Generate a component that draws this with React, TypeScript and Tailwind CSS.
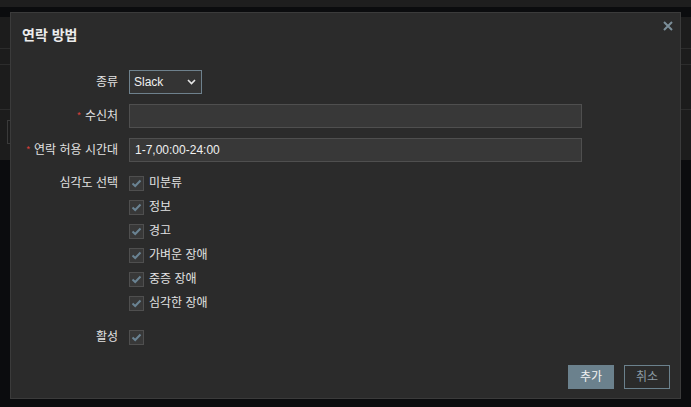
import React from "react";

const font = { fontFamily: '"Liberation Sans", "Noto Sans CJK KR", Arial, sans-serif' };

function Check() {
  return (
    <span className="flex h-[15px] w-[15px] shrink-0 items-center justify-center border border-[#4f4f4f] bg-[#383838]">
      <svg width="11" height="9" viewBox="0 0 11 9">
        <polyline points="1.5,4.5 4.2,7 9.5,1.5" fill="none" stroke="#6a8393" strokeWidth="2" />
      </svg>
    </span>
  );
}

function Label({ children, req }: { children: React.ReactNode; req?: boolean }) {
  return (
    <div className="w-[107px] shrink-0 text-right text-[12px] text-[#e2e2e2] whitespace-nowrap">
      {req && <span className="mr-[4px] text-[9px] text-[#e0413b] align-[2px]">*</span>}
      {children}
    </div>
  );
}

const severities = ["미분류", "정보", "경고", "가벼운 장애", "중증 장애", "심각한 장애"];

export default function App() {
  return (
    <div className="relative h-[407px] w-[691px] overflow-hidden bg-[#0b0c0e]" style={font}>
      <div className="h-[7px] bg-[#1e1e1e]" />
      <div className="mt-[10px] h-[143px] bg-[#1c1c1c]">
        <div className="h-[32px] border-b border-[#2c2c2c]" />
        <div className="h-[16px] border-b border-[#2c2c2c]" />
        <div className="h-[45px] border-b border-[#2c2c2c]" />
        <div className="ml-[7px] mt-[10px] h-[24px] w-[20px] border border-[#3a3a3a]" />
      </div>

      <div className="absolute left-[10px] top-[12px] flex h-[387px] w-[671px] flex-col border border-[#3b3b3b] bg-[#2b2b2b] text-[#e2e2e2]">
        <div className="relative pl-[11px] pt-[12px]">
          <div className="text-[14px] font-bold leading-[20px] text-[#ececec]">연락 방법</div>
          <svg className="absolute right-[7px] top-[8px]" width="10" height="10" viewBox="0 0 10 10">
            <path d="M1 1 L9 9 M9 1 L1 9" stroke="#7b8e99" strokeWidth="2" />
          </svg>
        </div>

        <div className="mt-[25px] flex flex-col gap-[10px]">
          <div className="flex items-center gap-[11px]">
            <Label>종류</Label>
            <div className="flex h-[24px] w-[73px] items-center justify-between border border-[#6e818d] bg-[#343434] pl-[4px] pr-[5px] text-[12px] text-[#f0f0f0]">
              <span>Slack</span>
              <svg width="9" height="6" viewBox="0 0 9 6">
                <polyline points="1,1 4.5,4.5 8,1" fill="none" stroke="#e6e6e6" strokeWidth="1.6" />
              </svg>
            </div>
          </div>
          <div className="flex items-center gap-[11px]">
            <Label req>수신처</Label>
            <div className="h-[24px] w-[453px] border border-[#4f4f4f] bg-[#383838]" />
          </div>
          <div className="flex items-center gap-[11px]">
            <Label req>연락 허용 시간대</Label>
            <div className="flex h-[24px] w-[453px] items-center border border-[#4f4f4f] bg-[#383838] pl-[5px] text-[12px] text-[#f0f0f0]">
              1-7,00:00-24:00
            </div>
          </div>
        </div>

        <div className="mt-[9px] flex gap-[11px]">
          <div className="flex h-[24px] items-center">
            <Label>심각도 선택</Label>
          </div>
          <div className="flex flex-col">
            {severities.map((s) => (
              <div key={s} className="flex h-[24px] items-center gap-[5px] text-[12px] text-[#e2e2e2]">
                <Check />
                <span>{s}</span>
              </div>
            ))}
          </div>
        </div>

        <div className="mt-[10px] flex h-[24px] items-center gap-[11px]">
          <Label>활성</Label>
          <Check />
        </div>

        <div className="mt-auto flex justify-end gap-[10px] pb-[9px] pr-[10px]">
          <div className="flex h-[24px] w-[46px] items-center justify-center bg-[#6b818d] text-[12px] text-[#f2f2f2]">추가</div>
          <div className="flex h-[24px] w-[46px] items-center justify-center border border-[#6b818d] text-[12px] text-[#8c9ba4]">취소</div>
        </div>
      </div>
    </div>
  );
}
